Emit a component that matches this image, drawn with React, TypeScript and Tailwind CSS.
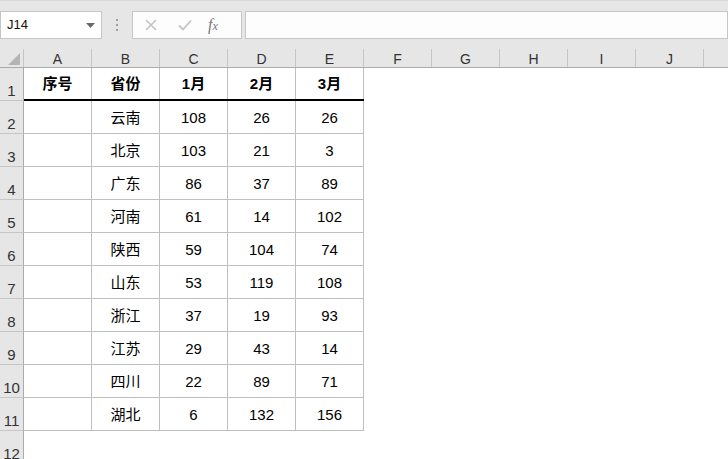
const cols = ['A', 'B', 'C', 'D', 'E', 'F', 'G', 'H', 'I', 'J'];

const rows = [
  ['云南', 108, 26, 26],
  ['北京', 103, 21, 3],
  ['广东', 86, 37, 89],
  ['河南', 61, 14, 102],
  ['陕西', 59, 104, 74],
  ['山东', 53, 119, 108],
  ['浙江', 37, 19, 93],
  ['江苏', 29, 43, 14],
  ['四川', 22, 89, 71],
  ['湖北', 6, 132, 156],
];

const font = { fontFamily: '"Liberation Sans", Arial, "Noto Sans CJK SC", sans-serif' };

function RowHead({ n }: { n: number }) {
  return (
    <div className="w-[24px] h-[33px] shrink-0 bg-[#e6e6e6] border-r border-[#ababab] border-b border-b-[#c6c6c6] flex items-end justify-center pb-[2px] text-[15px] leading-none text-[#333]">
      {n}
    </div>
  );
}

export default function App() {
  return (
    <div className="w-[728px] h-[459px] overflow-hidden bg-white text-[#111]" style={font}>
      {/* formula bar */}
      <div className="h-[49px] bg-[#e6e6e6] border-t border-[#d9d9d9] flex items-start pt-[10px]">
        <div className="w-[102px] h-[28px] bg-white border border-[#c6c6c6] flex items-center justify-between pl-[6px] pr-[6px] text-[13px]">
          <span className="text-[#111]">J14</span>
          <svg width="9" height="5" viewBox="0 0 9 5">
            <path d="M0 0 L9 0 L4.5 5 Z" fill="#6b6b6b" />
          </svg>
        </div>
        <div className="w-[30px] h-[28px] flex flex-col items-center justify-center gap-[3px]">
          <span className="w-[2px] h-[2px] bg-[#a0a0a0]" />
          <span className="w-[2px] h-[2px] bg-[#a0a0a0]" />
          <span className="w-[2px] h-[2px] bg-[#a0a0a0]" />
        </div>
        <div className="w-[110px] h-[28px] bg-[#fdfdfd] border border-[#c6c6c6] flex items-center">
          <svg width="12" height="12" viewBox="0 0 12 12" className="ml-[12px]">
            <path d="M1 1 L11 11 M11 1 L1 11" stroke="#c4c4c4" strokeWidth="1.6" />
          </svg>
          <svg width="14" height="12" viewBox="0 0 14 12" className="ml-[21px]">
            <path d="M1 6.5 L5 10.5 L13 1.5" stroke="#c4c4c4" strokeWidth="1.8" fill="none" />
          </svg>
          <span
            className="ml-[16px] text-[16px] italic text-[#7a7a7a]"
            style={{ fontFamily: '"Liberation Serif", serif' }}
          >
            f<span className="text-[12px]">x</span>
          </span>
        </div>
        <div className="ml-[3px] flex-1 h-[28px] bg-[#fdfdfd] border border-[#c6c6c6]" />
      </div>

      {/* column headers */}
      <div className="flex h-[19px] bg-[#e6e6e6] border-b border-[#ababab]">
        <div className="w-[24px] shrink-0 border-r border-[#c6c6c6] relative">
          <svg width="12" height="12" viewBox="0 0 12 12" className="absolute right-[3px] bottom-[2px]">
            <path d="M12 0 L12 12 L0 12 Z" fill="#b4b4b4" />
          </svg>
        </div>
        {cols.map((c) => (
          <div
            key={c}
            className="w-[68px] shrink-0 border-r border-[#c6c6c6] flex items-end justify-center text-[14px] leading-none pb-[1px] text-[#333]"
          >
            {c}
          </div>
        ))}
      </div>

      {/* header row */}
      <div className="flex">
        <RowHead n={1} />
        <div className="flex border-b-2 border-black h-[33px]">
          {['序号', '省份', '1月', '2月', '3月'].map((h) => (
            <div
              key={h}
              className="w-[68px] h-[31px] border-r border-[#bfbfbf] flex items-center justify-center font-bold text-[15px] text-black pt-[2px]"
            >
              {h}
            </div>
          ))}
        </div>
      </div>

      {rows.map((r, i) => (
        <div key={i} className="flex">
          <RowHead n={i + 2} />
          <div className="w-[68px] h-[33px] border-r border-b border-[#bfbfbf]" />
          {r.map((v, j) => (
            <div
              key={j}
              className="w-[68px] h-[33px] border-r border-b border-[#bfbfbf] flex items-center justify-center text-[15px] text-black pt-[3px]"
            >
              {v}
            </div>
          ))}
        </div>
      ))}

      <div className="flex">
        <RowHead n={12} />
      </div>
    </div>
  );
}
